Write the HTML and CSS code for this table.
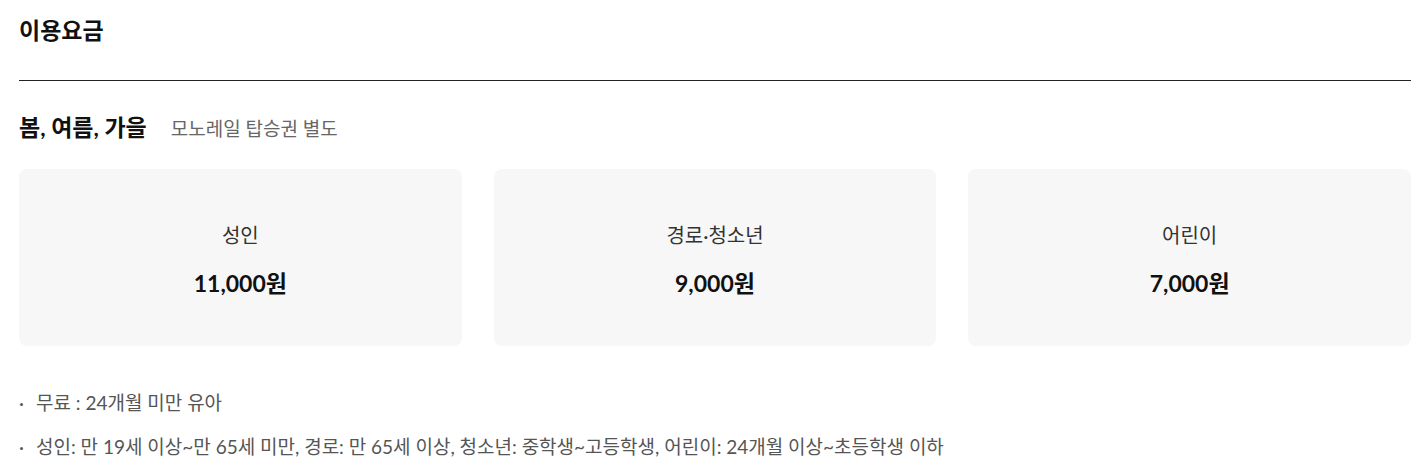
FILE: index.html
```html
<!DOCTYPE html>
<html lang="ko">
<head>
<meta charset="utf-8">
<link rel="stylesheet" href="styles.css">
</head>
<body>
<div class="page">
  <h2 class="title">이용요금</h2>
  <div class="season">
    <h3 class="season-name">봄, 여름, 가을</h3>
    <span class="season-note">모노레일 탑승권 별도</span>
  </div>
  <div class="cards">
    <div class="card">
      <div class="card-label">성인</div>
      <div class="card-price">11,000원</div>
    </div>
    <div class="card">
      <div class="card-label">경로·청소년</div>
      <div class="card-price">9,000원</div>
    </div>
    <div class="card">
      <div class="card-label">어린이</div>
      <div class="card-price">7,000원</div>
    </div>
  </div>
  <ul class="notes">
    <li>무료 : 24개월 미만 유아</li>
    <li>성인: 만 19세 이상~만 65세 미만, 경로: 만 65세 이상, 청소년: 중학생~고등학생, 어린이: 24개월 이상~초등학생 이하</li>
  </ul>
</div>
</body>
</html>
```

FILE: styles.css
```css
* { box-sizing: border-box; }
html, body { margin: 0; padding: 0; background: #fff; }
body {
  font-family: "Lato", "Noto Sans CJK KR", sans-serif;
  color: #222;
}
.page {
  padding: 0 12px 0 19px;
}
.title {
  margin: 0;
  font-size: 23px;
  font-weight: 700;
  line-height: 30px;
  padding: 15px 0 35px;
  border-bottom: 1px solid #222;
  color: #111;
}
.season {
  display: flex;
  align-items: baseline;
  gap: 24px;
  margin-top: 31px;
}
.season-name {
  margin: 0;
  font-size: 23px;
  font-weight: 700;
  line-height: 30px;
  color: #111;
}
.season-note {
  font-size: 19px;
  color: #666;
}
.cards {
  display: grid;
  grid-template-columns: repeat(3, 1fr);
  gap: 32px;
  margin-top: 27px;
}
.card {
  background: #f7f7f7;
  border-radius: 8px;
  height: 177px;
  display: flex;
  flex-direction: column;
  align-items: center;
  justify-content: center;
  padding-top: 4px;
}
.card-label {
  font-size: 20px;
  color: #333;
  line-height: 26px;
}
.card-price {
  margin-top: 20px;
  font-size: 23px;
  font-weight: 700;
  color: #111;
  line-height: 30px;
}
.notes {
  list-style: none;
  margin: 44px 0 0;
  padding: 0;
}
.notes li {
  position: relative;
  padding-left: 17px;
  font-size: 19px;
  line-height: 26px;
  color: #555;
  margin-bottom: 18px;
}
.notes li::before {
  content: "·";
  position: absolute;
  left: 0;
  top: 0;
  color: #555;
}
```
